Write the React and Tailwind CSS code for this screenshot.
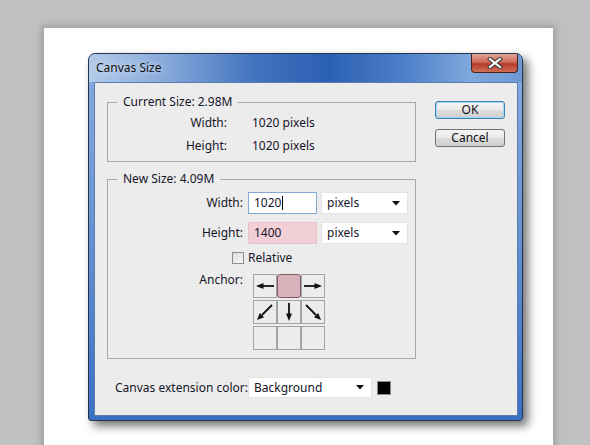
import React from "react"

const font = { fontFamily: '"Noto Sans", "Open Sans", sans-serif' }

const Arrow = ({ dir }) => {
  const paths = {
    left: { line: "M20 11 L8 11", head: "2,11 9.5,8 9.5,14" },
    right: { line: "M2 11 L14 11", head: "20,11 12.5,8 12.5,14" },
    down: { line: "M11 2 L11 14", head: "11,20 8,12.5 14,12.5" },
    sw: { line: "M18 4 L8 14", head: "3,19 5.8,11.9 10.1,16.2" },
    se: { line: "M4 4 L14 14", head: "19,19 16.2,11.9 11.9,16.2" },
  }
  const p = paths[dir]
  return (
    <svg width="22" height="22" viewBox="0 0 22 22">
      <path d={p.line} stroke="#111" strokeWidth="1.8" fill="none" />
      <polygon points={p.head} fill="#111" />
    </svg>
  )
}

const SelectBox = ({ label, w }) => (
  <div className={`${w} h-[22px] bg-white border border-[#e4e4e4] flex items-center justify-between pl-[5px] pr-[7px]`}>
    <span>{label}</span>
    <svg width="8" height="5" viewBox="0 0 8 5">
      <polygon points="0,0 8,0 4,4.5" fill="#111" />
    </svg>
  </div>
)

const Cell = ({ children, active }) => (
  <div
    className={`w-[24px] h-[24px] flex items-center justify-center ${
      active
        ? "bg-[#d8b2ba] border border-[#7f5a64] rounded-[3px]"
        : "bg-[#ececec] border border-[#a3a3a3]"
    }`}
  >
    {children}
  </div>
)

const Button = ({ children, primary }) => (
  <div
    className={`w-[70px] h-[18px] rounded-[3px] flex items-center justify-center text-[12px] text-[#111] bg-[linear-gradient(180deg,#f4f4f4_0%,#ebebeb_48%,#dcdcdc_52%,#cfcfcf_100%)] ${
      primary
        ? "border border-[#3c7fb1] shadow-[inset_0_0_0_1px_#9fd9f6]"
        : "border border-[#707070]"
    }`}
  >
    {children}
  </div>
)

export default function App() {
  return (
    <div className="w-[590px] h-[445px] bg-[#c0c0c0] overflow-hidden pt-[28px] pl-[44px]" style={font}>
      <div className="w-[509px] h-[430px] bg-white shadow-[0_0_6px_3px_rgba(0,0,0,0.16)] pt-[25px] pl-[44px]">
        {/* dialog */}
        <div className="w-[435px] h-[368px] rounded-t-[7px] rounded-b-[3px] border border-[#23344f] bg-[linear-gradient(180deg,#86abdf_0%,#6e98d4_40%,#3a70c4_100%)] shadow-[5px_5px_10px_rgba(0,0,0,0.55)] flex flex-col overflow-hidden">
          <div className="h-[28px] flex justify-between rounded-t-[6px] bg-[linear-gradient(90deg,#b3cbea_0%,#86a9da_18%,#4374bf_38%,#2b5fb2_55%,#4a7ec8_72%,#7fa8dc_88%,#6d98d3_100%)]">
            <span className="pl-[7px] self-center text-[12px] text-[#111] [text-shadow:0_0_6px_rgba(255,255,255,0.9)]">
              Canvas Size
            </span>
            <div className="w-[47px] h-[19px] mr-[4px] rounded-b-[4px] border border-t-0 border-[#4b2020] bg-[linear-gradient(180deg,#e3a596_0%,#d06a58_45%,#b83a2c_55%,#cf6f55_100%)] flex items-center justify-center">
              <svg width="16" height="12" viewBox="0 0 16 12">
                <path d="M3 2 L13 10 M13 2 L3 10" stroke="#3a3a3a" strokeWidth="4.2" strokeLinecap="square" />
                <path d="M3 2 L13 10 M13 2 L3 10" stroke="#fff" strokeWidth="2.2" strokeLinecap="square" />
              </svg>
            </div>
          </div>

          {/* client */}
          <div className="ml-[5px] mr-[4px] h-[334px] bg-[#ececec] border border-[#5b7cae] flex items-start text-[12px] leading-[16px] text-[#15152a]">
            <div className="pl-[12px] pt-[11px] flex flex-col">
              <fieldset className="w-[309px] border border-[#a8a8a8] pb-[7px]">
                <legend className="ml-[9px] px-[6px]">Current Size: 2.98M</legend>
                <div className="grid grid-cols-[119px_auto] gap-x-[25px] gap-y-[7px] pt-[5px]">
                  <span className="text-right">Width:</span>
                  <span>1020 pixels</span>
                  <span className="text-right">Height:</span>
                  <span>1020 pixels</span>
                </div>
              </fieldset>

              <fieldset className="w-[309px] mt-[9px] border border-[#a8a8a8] pb-[8px]">
                <legend className="ml-[9px] px-[6px]">New Size: 4.09M</legend>
                <div className="flex flex-col pt-[5px]">
                  <div className="flex items-center h-[22px]">
                    <span className="w-[135px] text-right">Width:</span>
                    <div className="ml-[5px] w-[69px] h-[22px] bg-white border border-[#82a9d3] flex items-center pl-[5px]">
                      1020<span className="w-px h-[14px] bg-black ml-px" />
                    </div>
                    <div className="ml-[4px]">
                      <SelectBox label="pixels" w="w-[87px]" />
                    </div>
                  </div>
                  <div className="flex items-center h-[22px] mt-[8px]">
                    <span className="w-[135px] text-right">Height:</span>
                    <div className="ml-[5px] w-[69px] h-[22px] bg-[#f2cfd6] border border-[#e6c3c9] flex items-center pl-[5px]">
                      1400
                    </div>
                    <div className="ml-[4px]">
                      <SelectBox label="pixels" w="w-[87px]" />
                    </div>
                  </div>
                  <div className="flex items-center h-[16px] mt-[6px] pl-[124px]">
                    <div className="w-[12px] h-[12px] border border-[#8e8e8e] bg-[linear-gradient(135deg,#dcdcdc,#f8f8f8)]" />
                    <span className="ml-[4px]">Relative</span>
                  </div>
                  <div className="flex items-start mt-[6px]">
                    <span className="w-[135px] text-right">Anchor:</span>
                    <div className="ml-[10px] mt-[2px] grid grid-cols-[24px_24px_24px] gap-y-[2px]">
                      <Cell><Arrow dir="left" /></Cell>
                      <Cell active />
                      <Cell><Arrow dir="right" /></Cell>
                      <Cell><Arrow dir="sw" /></Cell>
                      <Cell><Arrow dir="down" /></Cell>
                      <Cell><Arrow dir="se" /></Cell>
                      <Cell />
                      <Cell />
                      <Cell />
                    </div>
                  </div>
                </div>
              </fieldset>

              <div className="flex items-center mt-[18px] pl-[8px]">
                <span className="w-[133px]">Canvas extension color:</span>
                <div className="w-[124px] h-[21px] bg-white border border-[#e4e4e4] flex items-center justify-between pl-[5px] pr-[7px]">
                  <span>Background</span>
                  <svg width="8" height="5" viewBox="0 0 8 5">
                    <polygon points="0,0 8,0 4,4.5" fill="#111" />
                  </svg>
                </div>
                <div className="ml-[5px] w-[14px] h-[14px] bg-black border border-[#8a8a8a]" />
              </div>
            </div>

            <div className="ml-[19px] pt-[18px] flex flex-col gap-[10px]">
              <Button primary>OK</Button>
              <Button>Cancel</Button>
            </div>
          </div>
        </div>
      </div>
    </div>
  )
}
